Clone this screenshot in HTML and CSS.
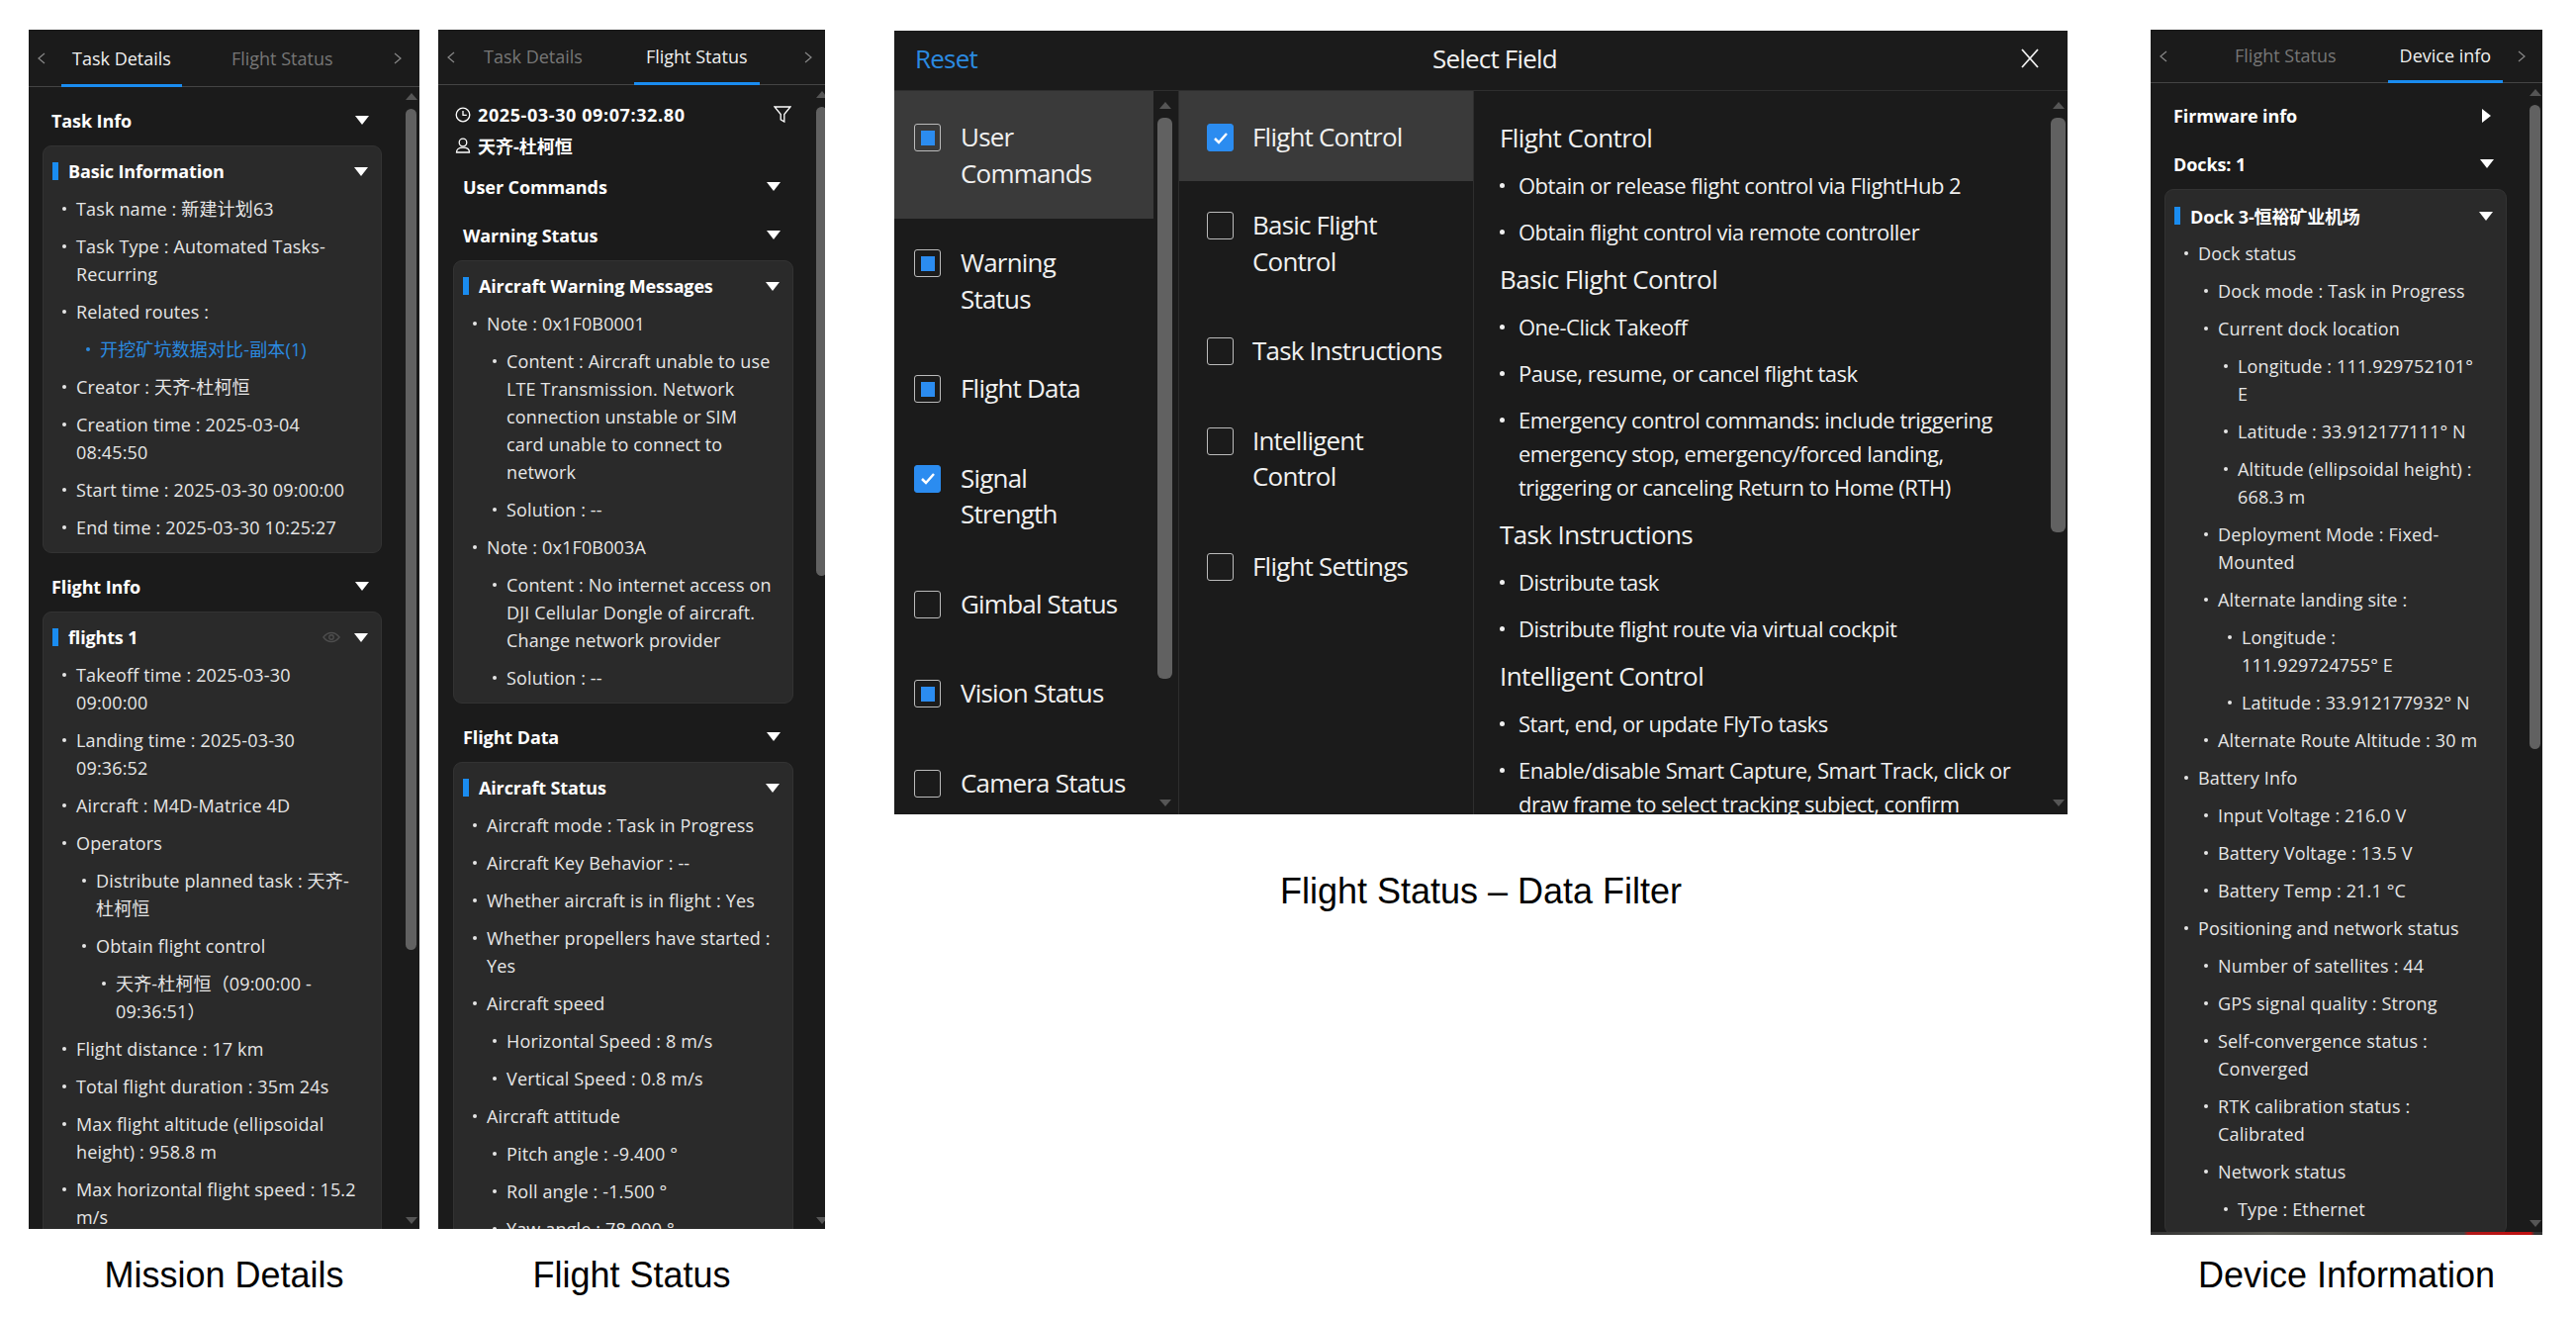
FILE: index.html
```html
<!DOCTYPE html>
<html lang="en">
<head>
    <meta charset="UTF-8">
    <title>Flight Task Panels</title>
    <link rel="stylesheet" href="styles.css">
</head>
<body>
<div class="page">

    <!-- Mission details -->
    <div class="shot shot-task">
        <div class="panel">
            <div class="tabs">
                <span class="tab-arrow"><svg width="8" height="12" viewBox="0 0 8 12"><path d="M7 1L1 6l6 5"/></svg></span>
                <span class="tab active">Task Details</span>
                <span class="tab">Flight Status</span>
                <span class="tab-arrow right"><svg width="8" height="12" viewBox="0 0 8 12"><path d="M1 1l6 5-6 5"/></svg></span>
            </div>
            <div class="panel-body">
                <div class="content">
                    <div class="section-head"><span>Task Info</span><i class="caret"></i></div>
                    <div class="card">
                        <div class="card-title"><b class="mark"></b><span>Basic Information</span><i class="caret"></i></div>
                        <ul class="tree">
                            <li>Task name : 新建计划63</li>
                            <li>Task Type : Automated Tasks-Recurring</li>
                            <li>Related routes :</li>
                            <li class="link">开挖矿坑数据对比-副本(1)</li>
                            <li>Creator : 天齐-杜柯恒</li>
                            <li>Creation time : 2025-03-04 08:45:50</li>
                            <li>Start time : 2025-03-30 09:00:00</li>
                            <li>End time : 2025-03-30 10:25:27</li>
                        </ul>
                    </div>
                    <div class="section-head spaced"><span>Flight Info</span><i class="caret"></i></div>
                    <div class="card">
                        <div class="card-title"><b class="mark"></b><span>flights 1</span>
                            <svg class="eye" width="18" height="12" viewBox="0 0 20 12"><path d="M1 6c2.500-3.300 5.500-5 9-5s6.500 1.700 9 5c-2.500 3.300-5.500 5-9 5s-6.500-1.700-9-5z"/><circle cx="10" cy="6" r="2.500"/></svg>
                            <i class="caret"></i></div>
                        <ul class="tree">
                            <li>Takeoff time : 2025-03-30 09:00:00</li>
                            <li>Landing time : 2025-03-30 09:36:52</li>
                            <li>Aircraft : M4D-Matrice 4D</li>
                            <li>Operators</li>
                            <li class="lv2">Distribute planned task : 天齐-杜柯恒</li>
                            <li class="lv2">Obtain flight control</li>
                            <li class="lv3">天齐-杜柯恒（09:00:00 - 09:36:51）</li>
                            <li>Flight distance : 17 km</li>
                            <li>Total flight duration : 35m 24s</li>
                            <li>Max flight altitude (ellipsoidal height) : 958.8 m</li>
                            <li>Max horizontal flight speed : 15.2 m/s</li>
                        </ul>
                    </div>
                </div>
                <div class="scrollbar">
                    <i class="sb-up"></i>
                    <div class="sb-thumb thumb-task"></div>
                    <i class="sb-down"></i>
                </div>
            </div>
        </div>
        <p class="caption">Mission Details</p>
    </div>

    <!-- Flight status -->
    <div class="shot shot-status">
        <div class="panel">
            <div class="tabs">
                <span class="tab-arrow"><svg width="8" height="12" viewBox="0 0 8 12"><path d="M7 1L1 6l6 5"/></svg></span>
                <span class="tab">Task Details</span>
                <span class="tab active">Flight Status</span>
                <span class="tab-arrow right"><svg width="8" height="12" viewBox="0 0 8 12"><path d="M1 1l6 5-6 5"/></svg></span>
            </div>
            <div class="panel-body">
                <div class="content">
                    <div class="meta">
                        <svg class="meta-icon" width="16" height="16" viewBox="0 0 16 16"><circle cx="8" cy="8" r="6.800"/><path d="M8 4v4.300h3.800"/></svg>
                        <span class="meta-date">2025-03-30 09:07:32.80</span>
                        <svg class="filter" width="18" height="17" viewBox="0 0 18 17"><path d="M1 1h16l-6.200 7.500V16l-3.600-2.200V8.500z"/></svg>
                    </div>
                    <div class="meta meta-user">
                        <svg class="meta-icon" width="16" height="16" viewBox="0 0 16 16"><circle cx="8" cy="5" r="3.800"/><path d="M1.500 15c0-3 2.200-4.800 6.500-4.800s6.500 1.800 6.500 4.800z"/></svg>
                        <span>天齐-杜柯恒</span>
                    </div>
                    <div class="section-head"><span>User Commands</span><i class="caret"></i></div>
                    <div class="section-head"><span>Warning Status</span><i class="caret"></i></div>
                    <div class="card">
                        <div class="card-title"><b class="mark"></b><span>Aircraft Warning Messages</span><i class="caret"></i></div>
                        <ul class="tree">
                            <li>Note : 0x1F0B0001</li>
                            <li class="lv2">Content : Aircraft unable to use LTE Transmission. Network connection unstable or SIM card unable to connect to network</li>
                            <li class="lv2">Solution : --</li>
                            <li>Note : 0x1F0B003A</li>
                            <li class="lv2">Content : No internet access on DJI Cellular Dongle of aircraft. Change network provider</li>
                            <li class="lv2">Solution : --</li>
                        </ul>
                    </div>
                    <div class="section-head spaced"><span>Flight Data</span><i class="caret"></i></div>
                    <div class="card">
                        <div class="card-title"><b class="mark"></b><span>Aircraft Status</span><i class="caret"></i></div>
                        <ul class="tree">
                            <li>Aircraft mode : Task in Progress</li>
                            <li>Aircraft Key Behavior : --</li>
                            <li>Whether aircraft is in flight : Yes</li>
                            <li>Whether propellers have started : Yes</li>
                            <li>Aircraft speed</li>
                            <li class="lv2">Horizontal Speed : 8 m/s</li>
                            <li class="lv2">Vertical Speed : 0.8 m/s</li>
                            <li>Aircraft attitude</li>
                            <li class="lv2">Pitch angle : -9.400 °</li>
                            <li class="lv2">Roll angle : -1.500 °</li>
                            <li class="lv2">Yaw angle : 78.000 °</li>
                        </ul>
                    </div>
                </div>
                <div class="scrollbar">
                    <i class="sb-up"></i>
                    <div class="sb-thumb thumb-status"></div>
                    <i class="sb-down"></i>
                </div>
            </div>
        </div>
        <p class="caption">Flight Status</p>
    </div>

    <!-- Data filter dialog -->
    <div class="shot shot-filter">
        <div class="dialog">
            <div class="dialog-head">
                <span class="reset">Reset</span>
                <span class="dialog-title">Select Field</span>
                <svg class="close" width="20" height="20" viewBox="0 0 20 20"><path d="M2 1l16 18M18 1L2 19"/></svg>
            </div>
            <div class="dialog-body">
                <div class="col-main">
                    <div class="options">
                        <div class="option first selected"><i class="box part"></i><span>User<br>Commands</span></div>
                        <div class="option"><i class="box part"></i><span>Warning<br>Status</span></div>
                        <div class="option"><i class="box part"></i><span>Flight Data</span></div>
                        <div class="option"><i class="box on"><svg width="16" height="13" viewBox="0 0 16 13"><path d="M2 7l4 4 8-9"/></svg></i><span>Signal<br>Strength</span></div>
                        <div class="option"><i class="box"></i><span>Gimbal Status</span></div>
                        <div class="option"><i class="box part"></i><span>Vision Status</span></div>
                        <div class="option"><i class="box"></i><span>Camera Status</span></div>
                    </div>
                    <div class="scrollbar dlg-bar">
                        <i class="sb-up"></i>
                        <div class="sb-thumb thumb-main"></div>
                        <i class="sb-down"></i>
                    </div>
                </div>
                <div class="col-sub">
                    <div class="option first selected"><i class="box on"><svg width="16" height="13" viewBox="0 0 16 13"><path d="M2 7l4 4 8-9"/></svg></i><span>Flight Control</span></div>
                    <div class="option"><i class="box"></i><span>Basic Flight<br>Control</span></div>
                    <div class="option"><i class="box"></i><span>Task Instructions</span></div>
                    <div class="option"><i class="box"></i><span>Intelligent<br>Control</span></div>
                    <div class="option"><i class="box"></i><span>Flight Settings</span></div>
                </div>
                <div class="col-desc">
                    <div class="desc">
                        <h4>Flight Control</h4>
                        <ul>
                            <li>Obtain or release flight control via FlightHub 2</li>
                            <li>Obtain flight control via remote controller</li>
                        </ul>
                        <h4>Basic Flight Control</h4>
                        <ul>
                            <li>One-Click Takeoff</li>
                            <li>Pause, resume, or cancel flight task</li>
                            <li>Emergency control commands: include triggering emergency stop, emergency/forced landing, triggering or canceling Return to Home (RTH)</li>
                        </ul>
                        <h4>Task Instructions</h4>
                        <ul>
                            <li>Distribute task</li>
                            <li>Distribute flight route via virtual cockpit</li>
                        </ul>
                        <h4>Intelligent Control</h4>
                        <ul>
                            <li>Start, end, or update FlyTo tasks</li>
                            <li>Enable/disable Smart Capture, Smart Track, click or draw frame to select tracking subject, confirm</li>
                        </ul>
                    </div>
                    <div class="scrollbar dlg-bar">
                        <i class="sb-up"></i>
                        <div class="sb-thumb thumb-desc"></div>
                        <i class="sb-down"></i>
                    </div>
                </div>
            </div>
        </div>
        <p class="caption">Flight Status – Data Filter</p>
    </div>

    <!-- Device information -->
    <div class="shot shot-device">
        <div class="panel">
            <div class="tabs">
                <span class="tab-arrow"><svg width="8" height="12" viewBox="0 0 8 12"><path d="M7 1L1 6l6 5"/></svg></span>
                <span class="tab">Flight Status</span>
                <span class="tab active">Device info</span>
                <span class="tab-arrow right"><svg width="8" height="12" viewBox="0 0 8 12"><path d="M1 1l6 5-6 5"/></svg></span>
            </div>
            <div class="panel-body">
                <div class="content">
                    <div class="section-head"><span>Firmware info</span><i class="caret closed"></i></div>
                    <div class="section-head"><span>Docks: 1</span><i class="caret"></i></div>
                    <div class="card">
                        <div class="card-title"><b class="mark"></b><span>Dock 3-恒裕矿业机场</span><i class="caret"></i></div>
                        <ul class="tree">
                            <li>Dock status</li>
                            <li class="lv2">Dock mode : Task in Progress</li>
                            <li class="lv2">Current dock location</li>
                            <li class="lv3">Longitude : 111.929752101° E</li>
                            <li class="lv3">Latitude : 33.912177111° N</li>
                            <li class="lv3">Altitude (ellipsoidal height) : 668.3 m</li>
                            <li class="lv2">Deployment Mode : Fixed-Mounted</li>
                            <li class="lv2">Alternate landing site :</li>
                            <li class="lv3 alt">Longitude :<br>111.929724755° E</li>
                            <li class="lv3 alt">Latitude : 33.912177932° N</li>
                            <li class="lv2">Alternate Route Altitude : 30 m</li>
                            <li>Battery Info</li>
                            <li class="lv2">Input Voltage : 216.0 V</li>
                            <li class="lv2">Battery Voltage : 13.5 V</li>
                            <li class="lv2">Battery Temp : 21.1 °C</li>
                            <li>Positioning and network status</li>
                            <li class="lv2">Number of satellites : 44</li>
                            <li class="lv2">GPS signal quality : Strong</li>
                            <li class="lv2">Self-convergence status : Converged</li>
                            <li class="lv2">RTK calibration status : Calibrated</li>
                            <li class="lv2">Network status</li>
                            <li class="lv3">Type : Ethernet</li>
                        </ul>
                    </div>
                </div>
                <div class="scrollbar">
                    <i class="sb-up"></i>
                    <div class="sb-thumb thumb-device"></div>
                    <i class="sb-down"></i>
                </div>
            </div>
            <div class="map-strip"></div>
        </div>
        <p class="caption">Device Information</p>
    </div>

</div>
</body>
</html>
```

FILE: styles.css
```css
body {
    margin: 0;
    background: #fff;
    font-family: "Open Sans", "Noto Sans CJK SC", sans-serif;
    color: #e6e6e6;
}

.page {
    display: flex;
    align-items: flex-start;
    padding: 30px 0 0 29px;
}

.shot-task { width: 395px; }
.shot-status { width: 391px; margin-left: 19px; }
.shot-filter { width: 1186px; margin-left: 70px; margin-top: 1px; }
.shot-device { width: 396px; margin-left: 84px; }

.caption {
    margin: 27px 0 0;
    font-family: "Liberation Sans", sans-serif;
    font-size: 36px;
    line-height: 40px;
    color: #000;
    text-align: center;
}

.shot-filter .caption { margin-top: 58px; }
.shot-device .caption { margin-top: 21px; }

/* side panels */
.panel {
    display: flex;
    flex-direction: column;
    height: 1212px;
    background: #1b1b1b;
    overflow: hidden;
}

.shot-device .panel { height: 1218px; }

.tabs {
    display: flex;
    flex: none;
    height: 57px;
    border-bottom: 1px solid #444;
    font-size: 18px;
    color: #777;
}

.shot-status .tabs { height: 55px; }
.shot-device .tabs { height: 53px; }

.tab-arrow {
    flex: none;
    display: flex;
    align-items: center;
    width: 33px;
    padding-left: 9px;
    box-sizing: border-box;
}

.tab-arrow svg { fill: none; stroke: #888; stroke-width: 1.2; }
.tab-arrow.right { margin-left: auto; width: 30px; }
.shot-task .tab-arrow.right { width: 35px; }
.shot-device .tab-arrow.right { width: 34px; }

.tab {
    display: flex;
    align-items: center;
    padding: 0 12px;
    border-bottom: 3px solid transparent;
    margin-bottom: -1px;
    white-space: nowrap;
}

.shot-task .tab { padding: 3px 11px 0; }
.tab + .tab { margin-left: 40px; }
.shot-task .tab + .tab { margin-left: 39px; }
.tab.active { color: #f0f0f0; border-bottom-color: #1a8cf0; }
.shot-status .tab-arrow + .tab { margin-left: 1px; }
.shot-device .tab-arrow + .tab { margin-left: 40px; }

.panel-body {
    display: flex;
    flex: 1;
    min-height: 0;
}

.content {
    flex: 1;
    min-width: 0;
    padding: 10px 19px 0 14px;
    overflow: hidden;
}

.shot-status .content { padding: 14px 19px 0 15px; }
.shot-device .content { padding: 9px 18px 0 14px; }

.meta {
    display: flex;
    align-items: center;
    height: 31px;
    font-size: 18px;
    font-weight: 700;
    color: #fff;
}

.meta-date { letter-spacing: 0.6px; }
.meta-user { margin-bottom: 3px; }
.meta svg { fill: none; stroke: #fff; stroke-width: 1.3; }
.meta-icon { flex: none; margin: 0 7px 0 2px; }
.filter { margin-left: auto; margin-right: 2px; }

.section-head {
    display: flex;
    justify-content: space-between;
    align-items: center;
    height: 49px;
    padding: 0 13px 2px 9px;
    box-sizing: border-box;
    font-size: 18px;
    font-weight: 700;
    letter-spacing: -0.1px;
    color: #fff;
}

.shot-status .section-head { padding-left: 10px; }
.section-head.spaced { margin-top: 10px; }

.caret {
    flex: none;
    width: 0;
    height: 0;
    border-left: 7px solid transparent;
    border-right: 7px solid transparent;
    border-top: 9px solid #fff;
}

.caret.closed {
    border-top: 7px solid transparent;
    border-bottom: 7px solid transparent;
    border-left: 9px solid #fff;
    border-right: 0;
    margin-right: 3px;
}

.card {
    padding: 11px 13px 1px 9px;
    background: #2a2a2a;
    border: 1px solid #333;
    border-radius: 9px;
}

.shot-device .card { padding-top: 12px; }

.card-title {
    display: flex;
    align-items: center;
    height: 28px;
    margin-bottom: 10px;
    font-size: 18px;
    font-weight: 700;
    letter-spacing: -0.15px;
    color: #fff;
}

.card-title span { flex: 1; }

.mark {
    width: 6px;
    height: 18px;
    margin-right: 10px;
    background: #1a8cf0;
}

.eye { margin-right: 14px; fill: none; stroke: #4d4d4d; stroke-width: 1.500; }

.tree {
    margin: 0;
    padding: 0 11px 0 0;
    list-style: none;
    font-size: 18px;
    line-height: 28px;
    letter-spacing: 0.15px;
}

.shot-status .tree { padding-right: 6px; }

.tree li {
    position: relative;
    margin-bottom: 10px;
    padding-left: 24px;
}

.tree li::before {
    content: "";
    position: absolute;
    left: 10px;
    top: 12px;
    width: 4px;
    height: 4px;
    border-radius: 50%;
    background: #e6e6e6;
}

.tree li.link { padding-left: 48px; color: #2b8ae0; }
.tree li.link::before { left: 34px; background: #2b8ae0; }
.tree li.lv2 { padding-left: 44px; }
.tree li.lv2::before { left: 30px; }
.tree li.lv3 { padding-left: 64px; }
.tree li.lv3::before { left: 50px; }
.tree li.lv3.alt { padding-left: 68px; }
.tree li.lv3.alt::before { left: 54px; }

/* scrollbars */
.scrollbar {
    flex: none;
    display: flex;
    flex-direction: column;
    width: 19px;
    padding-left: 5px;
    box-sizing: border-box;
}

.shot-status .scrollbar { width: 13px; padding-left: 4px; }
.shot-device .scrollbar { width: 18px; }

.sb-up, .sb-down {
    flex: none;
    width: 0;
    height: 0;
    border-left: 6px solid transparent;
    border-right: 6px solid transparent;
}

.sb-up { margin-top: 6px; border-bottom: 7px solid #555; }
.sb-down { margin-top: auto; margin-bottom: 5px; border-top: 7px solid #555; }

.sb-thumb {
    flex: none;
    width: 11px;
    margin-top: 9px;
    background: #616161;
    border-radius: 6px;
}

.thumb-task { height: 850px; }
.thumb-status { height: 474px; }
.thumb-device { height: 651px; }
.thumb-main { height: 567px; }
.thumb-desc { height: 419px; }

/* data filter dialog */
.dialog {
    display: flex;
    flex-direction: column;
    height: 792px;
    background: #1b1b1b;
    overflow: hidden;
    font-size: 26px;
    letter-spacing: -0.8px;
    color: #f0f0f0;
}

.dialog-head {
    display: flex;
    flex: none;
    align-items: center;
    justify-content: space-between;
    height: 61px;
    padding: 0 28px 4px 21px;
    box-sizing: border-box;
    border-bottom: 1px solid #2e2e2e;
}

.reset { color: #2b8ae0; }
.dialog-title { margin-right: 8px; }
.close { fill: none; stroke: #f0f0f0; stroke-width: 1.800; }

.dialog-body {
    display: flex;
    flex: 1;
    min-height: 0;
}

.col-main {
    display: flex;
    flex: none;
    width: 287px;
    border-right: 1px solid #2e2e2e;
}

.options { flex: 1; }

.shot-filter .dlg-bar { width: 25px; padding-left: 4px; }
.shot-filter .col-desc .dlg-bar { padding-left: 8px; }
.dlg-bar .sb-up { margin-top: 11px; margin-left: 2px; }
.dlg-bar .sb-down { margin-left: 2px; margin-bottom: 8px; }
.dlg-bar .sb-thumb { width: 15px; }

.col-sub {
    flex: none;
    width: 297px;
    border-right: 1px solid #2e2e2e;
}

.option {
    display: flex;
    padding: 26px 10px 28px 20px;
    line-height: 36.500px;
}

.col-sub .option { padding-left: 28px; }
.col-sub .box { margin-right: 19px; }
.option.first { padding-top: 28px; }
.col-sub .option.first { padding-bottom: 26.500px; }
.option.selected { background: #3a3a3a; }

.box {
    flex: none;
    display: flex;
    align-items: center;
    justify-content: center;
    width: 27px;
    height: 28px;
    margin: 5px 20px 0 0;
    box-sizing: border-box;
    border: 1px solid #bbb;
    border-radius: 3px;
}

.box.on { background: #2b8cf0; border-color: #2b8cf0; }
.box.on svg { fill: none; stroke: #fff; stroke-width: 2.500; }
.box.part::after {
    content: "";
    width: 14px;
    height: 15px;
    background: #2b8cf0;
}

.col-desc {
    display: flex;
    flex: 1;
    min-width: 0;
}

.desc {
    flex: 1;
    min-width: 0;
    padding: 29px 30px 0 26px;
    overflow: hidden;
    letter-spacing: -0.6px;
}

.desc h4 {
    margin: 0 0 13px;
    font-size: 26px;
    font-weight: 400;
    line-height: 36px;
}

.desc ul {
    margin: 0;
    padding: 0;
    list-style: none;
    font-size: 22px;
    line-height: 34px;
    letter-spacing: -0.5px;
}

.desc li {
    position: relative;
    margin-bottom: 13px;
    padding-left: 19px;
}

.desc li::before {
    content: "";
    position: absolute;
    left: 0;
    top: 15px;
    width: 5px;
    height: 5px;
    border-radius: 50%;
    background: #f0f0f0;
}

.map-strip {
    flex: none;
    height: 3px;
    background: linear-gradient(90deg, #333 0, #5a5a54 30%, #3c3c38 60%, #444 80%, #b01818 81%, #c01010 97%, #333 98%);
}
```
